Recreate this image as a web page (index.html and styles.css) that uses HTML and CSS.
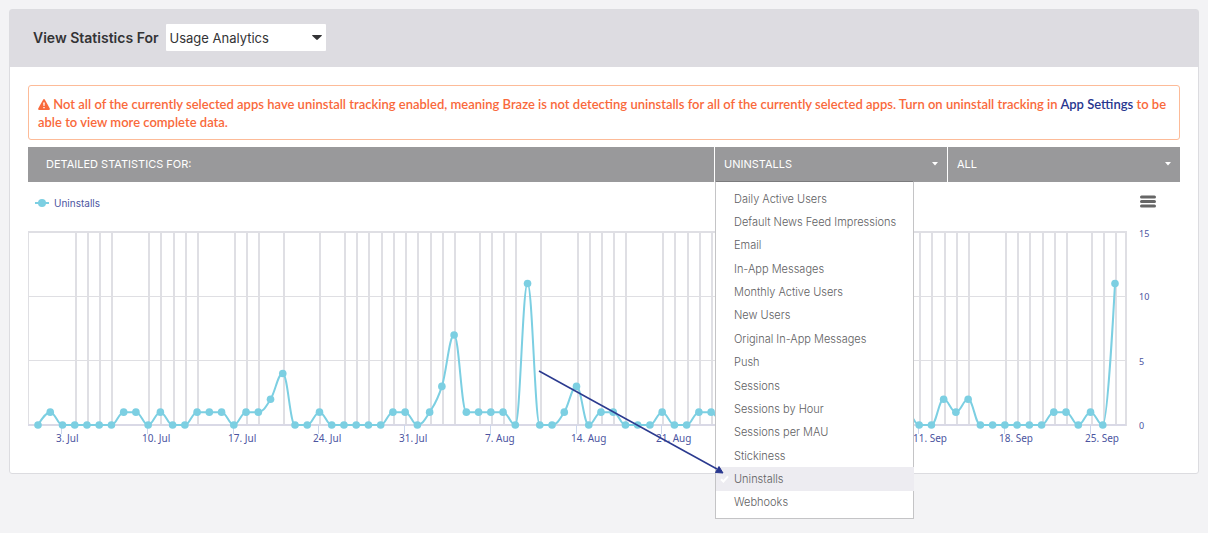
FILE: index.html
```html
<!DOCTYPE html>
<html lang="en">
<head>
<meta charset="utf-8">
<title>Usage Analytics</title>
<link rel="stylesheet" href="styles.css">
</head>
<body>
<main class="card">
  <header class="card-header">
    <label class="header-label" for="view">View Statistics For</label>
    <span class="select-wrap">
      <select class="view-select" id="view"><option>Usage Analytics</option></select>
      <svg class="select-caret" width="10" height="5" viewBox="0 0 10 5" aria-hidden="true"><path d="M0 .6Q0 0 .7 0H9.3Q10 0 10 .6L5.5 4.8Q5 5 4.5 4.8Z"/></svg>
    </span>
  </header>
  <div class="card-body">
    <p class="alert"><svg class="alert-icon" width="12" height="11" viewBox="0 0 12 11" aria-hidden="true"><path fill="#f9693b" d="M5.2.5Q6-.4 6.8.5L11.8 9.6Q12 10.8 11 11H1Q0 10.8.2 9.6Z"/><path fill="#fff" d="M5.2 3.4H6.8L6.5 7H5.5ZM5.3 7.9H6.7V9.3H5.3Z"/></svg> Not all of the currently selected apps have uninstall tracking enabled, meaning Braze is not detecting uninstalls for all of the currently selected apps. Turn on uninstall tracking in <a class="alert-link" href="#settings">App Settings</a> to be able to view more complete data.</p>
    <div class="stats-bar">
      <div class="bar-title">DETAILED STATISTICS FOR:</div>
      <div class="bar-cell">
        <button class="bar-control" type="button" aria-haspopup="listbox" aria-expanded="true">UNINSTALLS</button>
        <svg class="bar-caret" width="6" height="4" viewBox="0 0 6 4" aria-hidden="true"><path d="M0 0H6L3 3.5Z"/></svg>
        <ul class="menu">
          <li><button type="button" class="menu-item">Daily Active Users</button></li>
          <li><button type="button" class="menu-item">Default News Feed Impressions</button></li>
          <li><button type="button" class="menu-item">Email</button></li>
          <li><button type="button" class="menu-item">In-App Messages</button></li>
          <li><button type="button" class="menu-item">Monthly Active Users</button></li>
          <li><button type="button" class="menu-item">New Users</button></li>
          <li><button type="button" class="menu-item">Original In-App Messages</button></li>
          <li><button type="button" class="menu-item">Push</button></li>
          <li><button type="button" class="menu-item">Sessions</button></li>
          <li><button type="button" class="menu-item">Sessions by Hour</button></li>
          <li><button type="button" class="menu-item">Sessions per MAU</button></li>
          <li><button type="button" class="menu-item">Stickiness</button></li>
          <li class="menu-current"><svg class="menu-check" width="9" height="8" viewBox="0 0 9 8" aria-hidden="true"><path d="M1 4.2L3.4 6.5L8 1.4"/></svg><button type="button" class="menu-item">Uninstalls</button></li>
          <li><button type="button" class="menu-item">Webhooks</button></li>
        </ul>
        <svg class="pointer" width="190" height="110" viewBox="0 0 190 110" aria-hidden="true"><path class="pointer-line" d="M4 4L182 102"/><path class="pointer-head" d="M188 106L180.500 105.500L184 99.500Z"/></svg>
      </div>
      <div class="bar-cell">
        <select class="bar-control" aria-label="Segment"><option>ALL</option></select>
        <svg class="bar-caret" width="6" height="4" viewBox="0 0 6 4" aria-hidden="true"><path d="M0 0H6L3 3.5Z"/></svg>
      </div>
    </div>
    <div class="chart-head">
      <span class="legend"><svg width="16" height="8" viewBox="0 0 16 8" aria-hidden="true"><path d="M1 4H15" stroke="#7ccfe2" stroke-width="2"/><circle cx="8" cy="4" r="4" fill="#7ccfe2"/></svg>Uninstalls</span>
      <button class="export" type="button" aria-label="Chart menu"><svg width="16" height="13" viewBox="0 0 16 13" aria-hidden="true"><path d="M1.500 2H14.500M1.500 6.500H14.500M1.500 11H14.500"/></svg></button>
    </div>
    <svg class="chart" id="chart" viewBox="0 0 1152 234" role="img" aria-label="Uninstalls per day"></svg>
  </div>
</main>
<script src="chart.js"></script>
</body>
</html>
```
FILE: styles.css
```css
* { box-sizing: border-box; }
body {
  min-height: 100vh;
  margin: 0;
  padding: 9px;
  background: #f3f3f5;
  color: #333335;
  font-family: Inter, "Open Sans", sans-serif;
}
button, select { font-family: inherit; margin: 0; border: 0; }
.card {
  background: #fff;
  border: 1px solid #dcdce0;
  border-radius: 3px;
}
.card-header {
  display: flex;
  align-items: center;
  gap: 7px;
  height: 57px;
  padding: 0 23px 2px;
  background: #dddce1;
}
.header-label { font-size: 14px; font-weight: 600; }
.select-wrap { position: relative; display: flex; }
.view-select {
  appearance: none;
  width: 160px;
  height: 27px;
  padding: 0 4px;
  border-radius: 1px;
  background: #fff;
  color: #333335;
  font-size: 13px;
}
.select-caret { position: absolute; right: 4px; top: 11px; fill: #333335; }
.card-body { padding: 18px 18px 17px; }
.alert {
  margin: 0 0 7px;
  padding: 9px 9px 8px;
  border: 1px solid #fdbb98;
  border-radius: 3px;
  color: #f9693b;
  font-family: Lato, "Open Sans", sans-serif;
  font-size: 13px;
  font-weight: 600;
  line-height: 18px;
}
.alert-icon { vertical-align: -1px; }
.alert-link { color: #27368f; text-decoration: none; }
.stats-bar {
  display: grid;
  grid-template-columns: 1fr 232px 232px;
  gap: 1px;
  height: 35px;
  color: #fff;
  font-size: 11px;
}
.bar-title { padding: 0 18px; background: #99999b; line-height: 34px; }
.bar-cell { position: relative; background: #99999b; }
.bar-control {
  display: block;
  appearance: none;
  width: 100%;
  height: 34px;
  padding: 0 9px;
  background: transparent;
  color: #fff;
  font-size: 11px;
  text-align: left;
}
.bar-caret { position: absolute; right: 9px; top: 15px; fill: #fff; }
.menu {
  position: absolute;
  z-index: 2;
  top: 34px;
  left: 0;
  display: grid;
  grid-auto-rows: 1fr;
  width: 199px;
  height: 338px;
  margin: 0;
  padding: 5px 0 4px;
  list-style: none;
  background: #fff;
  border: 1px solid #c4c4c6;
  border-top-color: #7b7b7d;
}
.menu li { position: relative; display: flex; }
.menu-current { background: #edecf1; }
.menu-item {
  width: 100%;
  padding: 0 18px;
  background: transparent;
  color: #606062;
  font-size: 11px;
  font-weight: 300;
  text-align: left;
  white-space: nowrap;
}
.menu-check { position: absolute; left: 4px; top: 8px; fill: none; stroke: #fff; stroke-width: 2; }
.pointer { position: absolute; z-index: 3; top: 220px; left: -180px; pointer-events: none; }
.pointer-line { fill: none; stroke: #2b3a8f; stroke-width: 1.5; }
.pointer-head { fill: #27368f; stroke: #27368f; }
.chart-head {
  display: flex;
  align-items: center;
  justify-content: space-between;
  height: 40px;
  padding: 0 24px 2px 6px;
}
.legend {
  display: flex;
  align-items: center;
  gap: 4px;
  padding-top: 3px;
  color: #4c559f;
  font-size: 10px;
}
.export { display: flex; padding: 0; background: transparent; }
.export path { stroke: #666; stroke-width: 3; stroke-linecap: round; }
.chart { display: block; width: 100%; height: auto; }
.grid-day { fill: #dfdfe4; }
.grid-value { fill: #dfdfe3; }
.axis-line { fill: #d9d9e6; }
.tick { fill: #ccd6eb; }
.series { fill: none; stroke: #7ccfe2; stroke-width: 2; stroke-linejoin: round; }
.dot { fill: #7ccfe2; }
.axis-text { fill: #4c559f; font-family: "Noto Sans", sans-serif; font-size: 10px; }
.value-text { fill: #4c559f; font-family: "Noto Sans", sans-serif; font-size: 9px; }
```
FILE: chart.js
```javascript
const values = [
  0,1,0,0,0,0,0,1,1,0,1,0,0,1,1,1,0,1,1,2,4,0,0,1,0,0,0,0,0,1,1,0,1,3,7,
  1,1,1,1,0,11,0,0,1,3,0,1,1,0,0,0,1,0,0,1,1,0,0,1,0,0,1,1,0,0,1,0,0,
  1,1,0,1,0,0,2,1,2,0,0,0,0,0,0,1,1,0,1,0,11
];
const gridDays = [
  3,4,5,6,9,10,11,12,13,16,17,18,20,23,25,26,27,28,29,30,31,32,33,34,36,37,38,39,
  41,44,45,46,47,48,51,52,53,54,55,72,73,74,75,76,79,80,81,82,83,84,86,87,88
];
// Week number (from 3 July) and its label.
const weekLabels = [[0, "3. Jul"], [1, "10. Jul"], [2, "17. Jul"], [3, "24. Jul"],
  [4, "31. Jul"], [5, "7. Aug"], [6, "14. Aug"], [7, "21. Aug"],
  [10, "11. Sep"], [11, "18. Sep"], [12, "25. Sep"]];

const chart = document.getElementById("chart");
const left = 10, right = 1087, base = 203, plotTop = 9, plotRight = 1098;
const dayX = (i) => left + (right - left) * i / (values.length - 1);
const valueY = (v) => base - (base - plotTop - 1) * v / 15;

function add(tag, attrs, text) {
  const el = document.createElementNS("http://www.w3.org/2000/svg", tag);
  for (const key in attrs) el.setAttribute(key, attrs[key]);
  if (text) el.textContent = text;
  chart.appendChild(el);
}
function bar(cls, x, y, width, height) {
  add("rect", { class: cls, x, y, width, height });
}

gridDays.forEach((d) => bar("grid-day", Math.round(dayX(d)), plotTop, 2, base - plotTop));
bar("grid-value", 0, plotTop, 1, base - plotTop);
bar("grid-day", plotRight - 1, plotTop, 2, base - plotTop + 1);
bar("grid-value", 0, 138, plotRight, 1);
bar("grid-value", 0, 74, plotRight, 1);
bar("grid-day", 0, plotTop, plotRight, 2);
bar("axis-line", 0, base - 1, plotRight, 2);

weekLabels.forEach(([week, label]) => {
  const x = Math.round(dayX(2 + week * 7));
  bar("tick", x - 1, base, 1, 9);
  add("text", { class: "axis-text", x: x - 6, y: 220 }, label);
});
[[15, 15], [10, 78], [5, 143], [0, 207]].forEach(([label, y]) => {
  add("text", { class: "value-text", x: 1111, y }, String(label));
});

// Spline through the points, clamped so that a curve never passes an extreme.
const pts = values.map((v, i) => ({ x: dayX(i), y: valueY(v) }));
let path = `M${pts[0].x} ${pts[0].y}`;
let out = pts[0];
for (let i = 1; i < pts.length; i++) {
  const p = pts[i], prev = pts[i - 1], next = pts[i + 1];
  let into = p, leave = p;
  if (next) {
    const lx = (1.5 * p.x + prev.x) / 2.5, rx = (1.5 * p.x + next.x) / 2.5;
    let ly = (1.5 * p.y + prev.y) / 2.5, ry = (1.5 * p.y + next.y) / 2.5;
    const shift = (ry - ly) * (rx - p.x) / (rx - lx) + p.y - ry;
    ly += shift;
    ry += shift;
    const high = Math.max(prev.y, p.y), low = Math.min(prev.y, p.y);
    if (ly > high) { ly = high; ry = 2 * p.y - ly; }
    else if (ly < low) { ly = low; ry = 2 * p.y - ly; }
    const high2 = Math.max(next.y, p.y), low2 = Math.min(next.y, p.y);
    if (ry > high2) { ry = high2; ly = 2 * p.y - ry; }
    else if (ry < low2) { ry = low2; ly = 2 * p.y - ry; }
    into = { x: lx, y: ly };
    leave = { x: rx, y: ry };
  }
  path += `C${out.x} ${out.y} ${into.x} ${into.y} ${p.x} ${p.y}`;
  out = leave;
}
add("path", { class: "series", d: path });
pts.forEach((p) => add("circle", { class: "dot", cx: p.x, cy: p.y, r: 3.8 }));
```
